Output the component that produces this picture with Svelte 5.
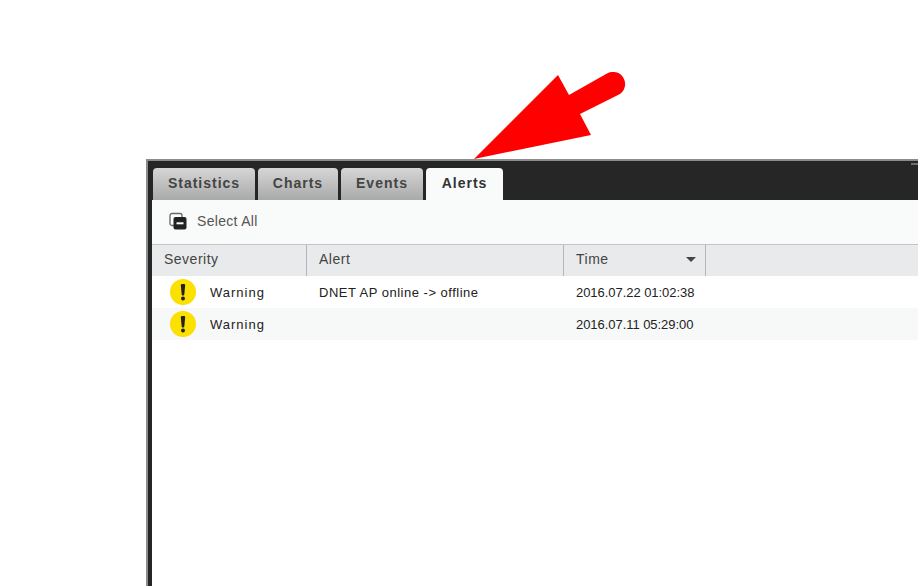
<script>
    const tabs = ["Statistics", "Charts", "Events", "Alerts"];
    const alerts = [
        { severity: "Warning", alert: "DNET AP online -> offline", time: "2016.07.22 01:02:38" },
        { severity: "Warning", alert: "", time: "2016.07.11 05:29:00" }
    ];
</script>

<div class="page">
    <svg class="arrow" width="160" height="90" viewBox="470 72 160 90">
        <path d="M474 159 L558 75 L569 95 L607 73.500 A12 12 0 0 1 619 94.500 L580 114 L591 135 Z" fill="#ff0000" />
    </svg>
    <div class="window">
        <i class="grip"></i>
        <div class="tabs">
            {#each tabs as tab}
                <div class="tab" class:active={tab == "Alerts"}>{tab}</div>
            {/each}
        </div>
        <div class="toolbar">
            <svg width="18" height="18" viewBox="0 0 18 18">
                <rect x="1" y="1.500" width="12" height="12" rx="2" fill="#fff" stroke="#666" stroke-width="1.300" />
                <rect x="4.500" y="5" width="13" height="12.500" rx="2" fill="#222" />
                <rect x="7.500" y="10.300" width="7" height="2" fill="#fff" />
            </svg>
            <span>Select All</span>
        </div>
        <div class="head">
            <div class="col severity">Severity</div>
            <div class="col alert">Alert</div>
            <div class="col time">Time<i class="caret"></i></div>
        </div>
        {#each alerts as row, i}
            <div class="row" class:odd={i % 2 == 1}>
                <div class="col severity">
                    <svg width="26" height="26" viewBox="0 0 26 26">
                        <circle cx="13" cy="13" r="13" fill="#fbe000" />
                        <path d="M10.800 6.200 A1.200 1.200 0 0 1 12 5 H14 A1.200 1.200 0 0 1 15.200 6.200 L14.300 15.500 A1 1 0 0 1 13.300 16.400 H12.700 A1 1 0 0 1 11.700 15.500 Z" fill="#222" />
                        <circle cx="13" cy="19.500" r="2" fill="#222" />
                    </svg>
                    <span>{row.severity}</span>
                </div>
                <div class="col alert">{row.alert}</div>
                <div class="col time">{row.time}</div>
            </div>
        {/each}
    </div>
</div>

<style>
    :global(body) {
        background: #fff;
        overflow: hidden;
    }
    .page {
        position: relative;
        height: 586px;
        padding: 159px 0 0 146px;
        box-sizing: border-box;
        overflow: hidden;
        font-family: "Liberation Sans", sans-serif;
        font-size: 13px;
        color: #333;
    }
    .arrow {
        position: absolute;
        left: 470px;
        top: 72px;
    }
    .window {
        position: relative;
        height: 427px;
        box-sizing: border-box;
        border-top: 2px solid #8c8c8c;
        border-left: 2px solid #8c8c8c;
        background: #fff;
        box-shadow: inset 4px 0 0 #262626;
    }
    .grip {
        position: absolute;
        right: 0;
        top: 2px;
        width: 7px;
        height: 2px;
        background: #6e6e6e;
    }
    .tabs {
        display: flex;
        gap: 3px;
        height: 39px;
        box-sizing: border-box;
        padding: 7px 0 0 5px;
        background: #262626;
    }
    .tab {
        display: flex;
        align-items: center;
        justify-content: center;
        padding-bottom: 2px;
        box-sizing: border-box;
        border-radius: 4px 4px 0 0;
        background: linear-gradient(#d6d6d6, #a9a9a9);
        font-size: 14px;
        font-weight: bold;
        letter-spacing: 1px;
        color: #444;
    }
    .tab:nth-child(1) { width: 102px; }
    .tab:nth-child(2) { width: 80px; }
    .tab:nth-child(3) { width: 82px; }
    .tab:nth-child(4) { width: 77px; }
    .tab.active {
        background: #f9fafa;
        color: #333;
    }
    .toolbar {
        display: flex;
        align-items: center;
        gap: 10px;
        height: 44px;
        box-sizing: border-box;
        margin-left: 4px;
        padding: 0 0 3px 17px;
        background: #f9fafa;
        font-size: 14px;
        letter-spacing: 0.3px;
        color: #555;
    }
    .head, .row {
        display: flex;
        margin-left: 4px;
    }
    .head {
        height: 32px;
        box-sizing: border-box;
        border-top: 1px solid #c4c4c4;
        background: #e9eaeb;
        font-size: 14px;
        letter-spacing: 0.5px;
        color: #444;
    }
    .head .col {
        padding-bottom: 3px;
        border-right: 1px solid #b5b5b5;
    }
    .row {
        height: 32px;
        background: #fff;
        letter-spacing: 0.5px;
        color: #222;
    }
    .row.odd {
        background: #f7f8f8;
    }
    .col {
        display: flex;
        align-items: center;
        box-sizing: border-box;
        padding-left: 12px;
    }
    .severity { width: 155px; }
    .alert { width: 257px; }
    .time {
        position: relative;
        width: 142px;
    }
    .row .time {
        letter-spacing: -0.05px;
    }
    .row .severity {
        gap: 14px;
        padding-left: 18px;
        letter-spacing: 1px;
    }
    .caret {
        position: absolute;
        right: 9px;
        top: 12px;
        border: 5px solid transparent;
        border-top: 5px solid #444;
        border-bottom: 0;
    }
</style>
